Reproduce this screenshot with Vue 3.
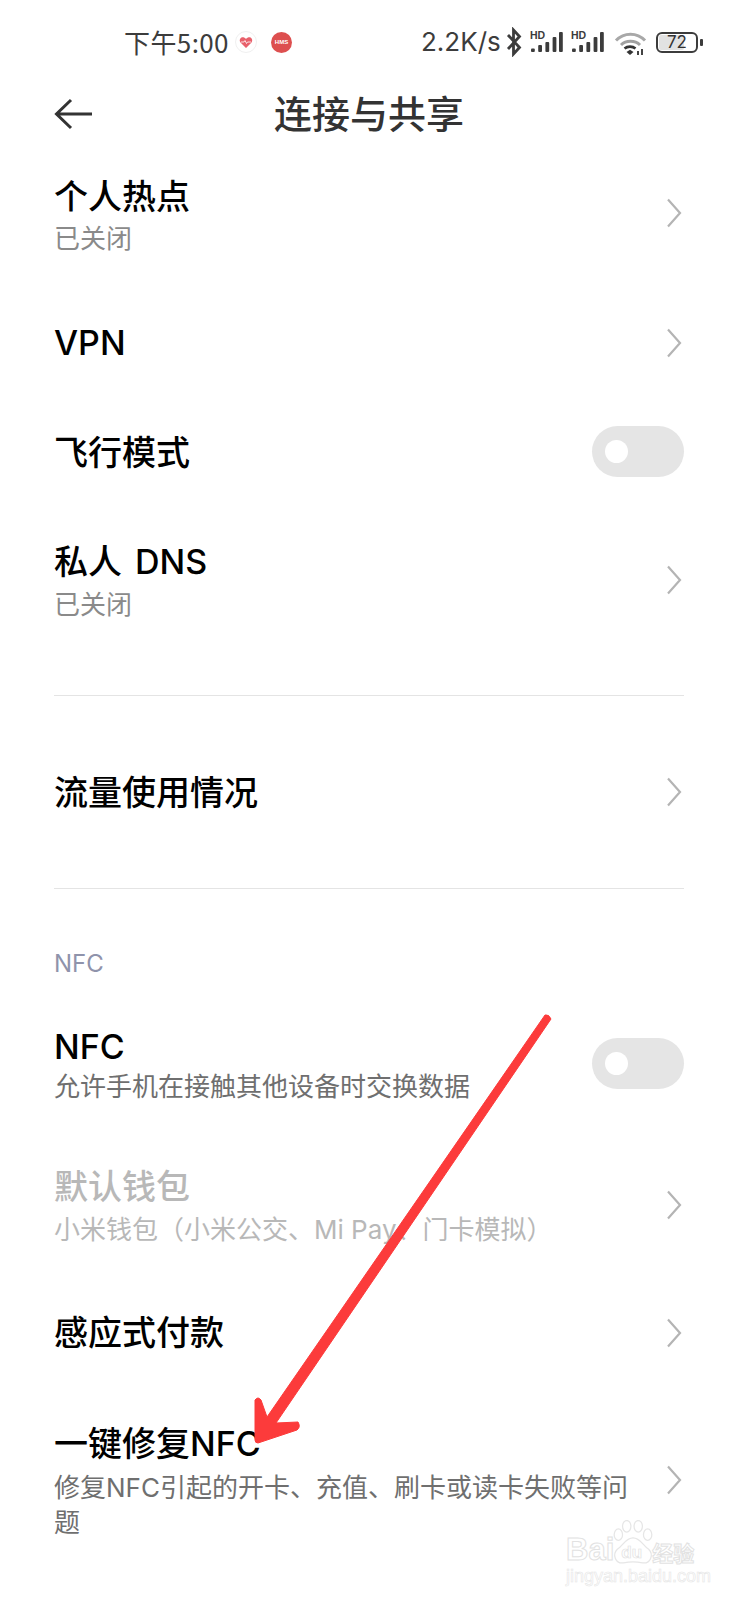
<script setup>
const chevronPath = 'M2 1.5 L14 15 L2 28.5'
</script>

<template>
  <div class="page">
    <div class="status">
      <span class="time">下午5:00</span>
      <svg class="heart" width="24" height="24" viewBox="0 0 24 24">
        <circle cx="12" cy="12" r="10.5" fill="#fff" stroke="#f0f0f0" />
        <path d="M12 18 L6.5 12.5 C4.5 9.5 7 6.5 9.5 7.3 C11 7.8 12 9 12 9 C12 9 13 7.8 14.5 7.3 C17 6.5 19.5 9.5 17.5 12.5 Z" fill="#e8606b" />
        <path d="M7 12 H10 L11 10.5 L12.5 13.5 L13.5 12 H17" fill="none" stroke="#fff" stroke-width="0.8" />
      </svg>
      <span class="hms">HMS</span>
      <span class="speed">2.2K/s</span>
      <svg class="bt" width="16" height="30" viewBox="0 0 16 30">
        <path d="M2 8 L13.5 20.5 L7.5 27 V3 L13.5 9.5 L2 22" fill="none" stroke="#3c3c3c" stroke-width="2.8" />
      </svg>
      <span class="signal">
        <em>HD</em>
        <svg width="33" height="20" viewBox="0 0 33 20">
          <rect x="1" y="16.5" width="3.8" height="3.5" rx="1" />
          <rect x="8.2" y="13" width="3.8" height="7" rx="1" />
          <rect x="15.4" y="10" width="3.8" height="10" rx="1" />
          <rect x="22.6" y="5" width="3.8" height="15" rx="1" />
          <rect x="29" y="0" width="3.8" height="20" rx="1" />
        </svg>
      </span>
      <span class="signal">
        <em>HD</em>
        <svg width="33" height="20" viewBox="0 0 33 20">
          <rect x="1" y="16.5" width="3.8" height="3.5" rx="1" />
          <rect x="8.2" y="13" width="3.8" height="7" rx="1" />
          <rect x="15.4" y="10" width="3.8" height="10" rx="1" />
          <rect x="22.6" y="5" width="3.8" height="15" rx="1" />
          <rect x="29" y="0" width="3.8" height="20" rx="1" />
        </svg>
      </span>
      <svg class="wifi" width="33" height="28" viewBox="0 0 33 28">
        <path d="M2 12.5 C10 4 23 4 31 12.5" fill="none" stroke="#a8a8a8" stroke-width="3" />
        <path d="M7 17 C12 12 21 12 26 17" fill="none" stroke="#a0a0a0" stroke-width="3" />
        <path d="M10.5 20.5 C13.5 18 18.5 18 21.5 20.5" fill="none" stroke="#333" stroke-width="2.6" />
        <path d="M12.5 24 L16 21.8 L19.5 24 L16 27 Z" fill="#333" />
        <path d="M24 27 V23 M28 27 V21" stroke="#444" stroke-width="2" />
      </svg>
      <span class="battery"><i></i><b>72</b></span>
      <span class="nub"></span>
    </div>

    <div class="nav">
      <svg class="back" width="40" height="36" viewBox="0 0 40 36">
        <path d="M38 18 H3 M17 4 L2.5 18 L17 32" fill="none" stroke="#333" stroke-width="3" />
      </svg>
      <h1>连接与共享</h1>
    </div>

    <section class="row r1">
      <div class="txt"><div class="t">个人热点</div><div class="s">已关闭</div></div>
      <svg class="chev" width="16" height="30" viewBox="0 0 16 30"><path :d="chevronPath" /></svg>
    </section>
    <section class="row r2">
      <div class="txt"><div class="t">VPN</div></div>
      <svg class="chev" width="16" height="30" viewBox="0 0 16 30"><path :d="chevronPath" /></svg>
    </section>
    <section class="row r3">
      <div class="txt"><div class="t">飞行模式</div></div>
      <span class="toggle"><i></i></span>
    </section>
    <section class="row r4">
      <div class="txt"><div class="t">私人 DNS</div><div class="s">已关闭</div></div>
      <svg class="chev" width="16" height="30" viewBox="0 0 16 30"><path :d="chevronPath" /></svg>
    </section>

    <div class="divider first"></div>

    <section class="row r5">
      <div class="txt"><div class="t">流量使用情况</div></div>
      <svg class="chev" width="16" height="30" viewBox="0 0 16 30"><path :d="chevronPath" /></svg>
    </section>

    <div class="divider"></div>

    <div class="label">NFC</div>

    <section class="row r6">
      <div class="txt"><div class="t">NFC</div><div class="s dark">允许手机在接触其他设备时交换数据</div></div>
      <span class="toggle"><i></i></span>
    </section>
    <section class="row r7">
      <div class="txt off"><div class="t">默认钱包</div><div class="s">小米钱包（小米公交、Mi Pay、门卡模拟）</div></div>
      <svg class="chev" width="16" height="30" viewBox="0 0 16 30"><path :d="chevronPath" /></svg>
    </section>
    <section class="row r8">
      <div class="txt"><div class="t">感应式付款</div></div>
      <svg class="chev" width="16" height="30" viewBox="0 0 16 30"><path :d="chevronPath" /></svg>
    </section>
    <section class="row r9">
      <div class="txt wide"><div class="t">一键修复NFC</div><div class="s dark">修复NFC引起的开卡、充值、刷卡或读卡失败等问题</div></div>
      <svg class="chev" width="16" height="30" viewBox="0 0 16 30"><path :d="chevronPath" /></svg>
    </section>

    <svg class="arrow" width="738" height="1600" viewBox="0 0 738 1600">
      <path d="M545 1015 Q549 1014 551 1019 L276 1423 L298 1422 Q301 1427 297 1430 L258 1443 Q255 1443 255 1440 L255 1400 Q258 1396 261 1400 L267 1417 Z" fill="#fc3b3b" stroke="#fc3b3b" stroke-width="1" stroke-linejoin="round" />
    </svg>

    <div class="mark">
      <div class="brand">
        <span class="bai">Bai</span>
        <span class="paw">
          <svg width="44" height="46" viewBox="0 0 42 44">
            <g fill="#fff" stroke="#e6e6e6" stroke-width="1.2">
              <ellipse cx="7" cy="14" rx="4" ry="5.5" />
              <ellipse cx="15" cy="6" rx="4" ry="5.5" />
              <ellipse cx="26" cy="6" rx="4" ry="5.5" />
              <ellipse cx="35" cy="14" rx="4" ry="5.5" />
              <path d="M21 17 C14 17 12 24 6 28 C1 33 4 42 12 41 C17 40 25 40 30 41 C38 42 41 33 36 28 C30 24 28 17 21 17 Z" />
            </g>
          </svg>
          <b>du</b>
        </span>
        <span class="cn">经验</span>
      </div>
      <div class="url">jingyan.baidu.com</div>
    </div>
  </div>
</template>

<style>
html, body { margin: 0; background: #fff; }
</style>

<style scoped>
.page {
  position: relative;
  width: 738px;
  height: 1600px;
  overflow: hidden;
  background: #fff;
  font-family: Inter, "Noto Sans CJK SC", sans-serif;
  color: #000;
}
.status {
  height: 82px;
  display: flex;
  align-items: center;
  padding-left: 124px;
  color: #3c3c3c;
  box-sizing: border-box;
}
.time {
  font-family: "Noto Sans CJK SC", sans-serif;
  font-size: 26px;
  letter-spacing: 0.4px;
  width: 108px;
  white-space: nowrap;
}
.heart { margin: 2px 0 0 2px; }
.hms {
  margin: 2px 0 0 13px;
  width: 21px;
  height: 21px;
  border-radius: 50%;
  background: #dd4f4f;
  color: #fff;
  font-size: 6px;
  font-weight: 700;
  line-height: 21px;
  text-align: center;
  font-family: "Liberation Sans", sans-serif;
}
.speed { margin-left: 129px; font-size: 26px; width: 83px; white-space: nowrap; }
.bt { margin: 2px 0 0 2px; }
.signal { position: relative; margin: 2px 0 0 8px; height: 20px; display: block; }
.signal svg { display: block; fill: #3c3c3c; }
.signal em {
  position: absolute;
  left: 0;
  top: -1px;
  font: normal 700 10.5px/9px "Liberation Sans", sans-serif;
  color: #3c3c3c;
}
.wifi { margin: 2px 0 0 10px; }
.battery {
  position: relative;
  margin: 2px 0 0 9px;
  width: 42px;
  height: 21px;
  box-sizing: border-box;
  border: 2px solid #3c3c3c;
  border-radius: 6px;
  display: block;
}
.battery i {
  position: absolute;
  left: 1px;
  top: 1px;
  bottom: 1px;
  width: 25px;
  background: #e2e2e2;
  border-radius: 2px;
}
.battery b {
  position: absolute;
  inset: 0;
  text-align: center;
  font-weight: 400;
  font-size: 17px;
  line-height: 17px;
  color: #333;
}
.nub { width: 3px; height: 7px; margin: 2px 0 0 2px; background: #3c3c3c; border-radius: 1px; }

.nav {
  position: relative;
  height: 64px;
  margin-bottom: 2px;
  display: flex;
  align-items: center;
  justify-content: center;
}
.nav h1 {
  margin: 0;
  font-size: 38px;
  font-weight: 500;
  line-height: 64px;
  color: #333;
}
.back { position: absolute; left: 54px; top: 14px; }

.row {
  box-sizing: border-box;
  padding: 0 56px 0 54px;
  display: flex;
  align-items: center;
  justify-content: space-between;
}
.r1 { height: 130px; }
.r2 { height: 130px; }
.r3 { height: 88px; }
.r4 { height: 168px; }
.r5 { height: 192px; }
.r6 { height: 172px; }
.r7 { height: 110px; }
.r8 { height: 146px; }
.r9 { height: 148px; }
.t { font-size: 34px; line-height: 46px; font-weight: 500; }
.s {
  margin-top: 2px;
  font-size: 26px;
  line-height: 35px;
  color: #8a8a8a;
}
.s.dark { color: #6f6f6f; }
.r1 .txt { margin-top: 3px; }
.r1 .s { margin-top: 1px; }
.r3 .txt { margin-top: 2px; }
.r4 .t { word-spacing: 4px; }
.r5 .txt { margin-top: 2px; }
.r6 .txt { margin-top: -1px; }
.r6 .s { margin-top: -1px; }
.r9 .txt { margin-top: 1px; }
.r9 .s { margin-top: 3px; }
.txt.off .t { color: #b8b8b8; }
.txt.off .s { color: #b8b8b8; }
.txt { white-space: nowrap; }
.txt.wide { width: 580px; white-space: normal; }
.chev { display: block; fill: none; stroke: #b4b4b4; stroke-width: 2.2; }
.toggle {
  position: relative;
  display: block;
  width: 92px;
  height: 51px;
  margin: -2px -2px 0 0;
  border-radius: 26px;
  background: #e5e5e5;
}
.toggle i {
  position: absolute;
  left: 13px;
  top: 14px;
  width: 23px;
  height: 23px;
  border-radius: 50%;
  background: #fff;
}
.divider { height: 1px; margin: 0 54px; background: #e4e4e4; }
.divider.first { margin-top: 31px; }
.label {
  margin-top: 60px;
  margin-bottom: -1px;
  padding-left: 54px;
  height: 30px;
  line-height: 30px;
  font-size: 24px;
  color: #8f93ab;
}
.arrow { position: absolute; left: 0; top: 0; pointer-events: none; }
.mark {
  position: absolute;
  left: 566px;
  top: 1518px;
  width: 140px;
  font-family: "Liberation Sans", sans-serif;
  color: #fff;
}
.brand {
  display: flex;
  align-items: flex-end;
  height: 48px;
  font-size: 31px;
  font-weight: 700;
  -webkit-text-stroke: 1px #e2e2e2;
}
.bai { line-height: 22px; margin-bottom: 5px; }
.paw { position: relative; display: block; height: 46px; margin-left: -3px; }
.paw svg { display: block; }
.paw b {
  position: absolute;
  left: 10px;
  top: 25px;
  font-size: 17px;
  line-height: 16px;
  -webkit-text-stroke: 0.7px #e2e2e2;
}
.cn {
  font-family: "Noto Sans CJK SC", sans-serif;
  font-size: 21px;
  line-height: 22px;
  margin: 0 0 3px -3px;
}
.url {
  font-size: 18px;
  line-height: 20px;
  white-space: nowrap;
  -webkit-text-stroke: 0.6px #e6e6e6;
}
</style>
